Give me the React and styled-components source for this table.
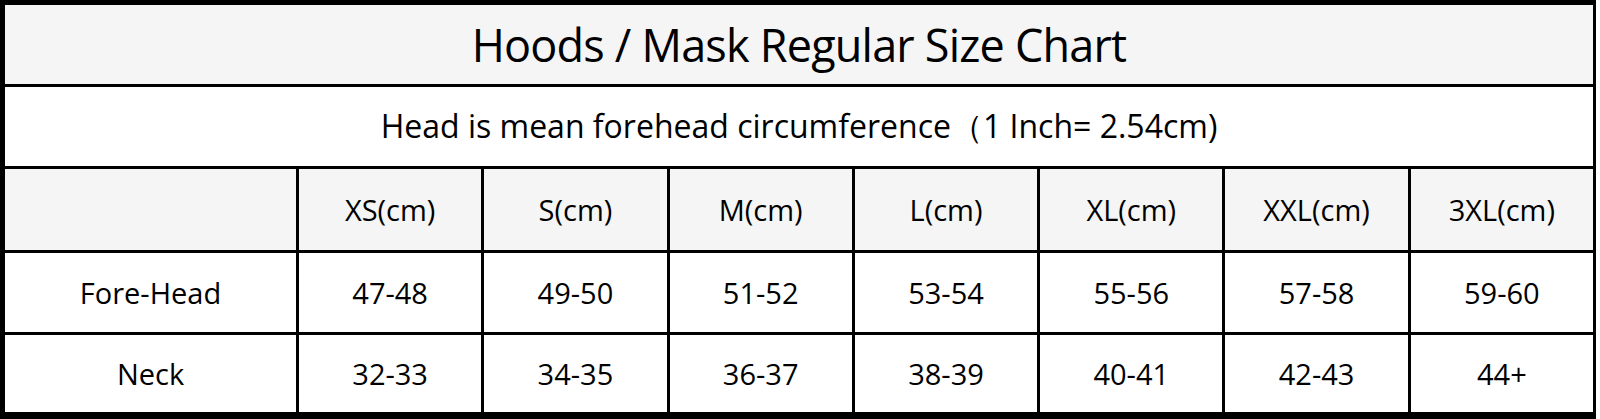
import styled, { createGlobalStyle } from 'styled-components';

const GlobalStyle = createGlobalStyle`
    html, body {
        margin: 0;
        padding: 0;
        background: #ffffff;
    }
    body {
        font-family: "Open Sans", "Liberation Sans", sans-serif;
        color: #000000;
    }
`;

const Chart = styled.div`
    width: 1596px;
    height: 419px;
    box-sizing: border-box;
    background: #000000;
    padding: 5px 3px 7px 5px;
    display: grid;
    grid-template-columns: 291px repeat(7, 1fr);
    grid-template-rows: 79px 79px 81px 79px 77px;
    gap: 3px;
`;

const Cell = styled.div`
    grid-column: ${props => props.$span ? '1 / -1' : 'auto'};
    background: ${props => props.$shaded ? '#f5f5f5' : '#ffffff'};
    display: flex;
    align-items: center;
    justify-content: center;
    font-size: ${props => props.$size || 29}px;
    letter-spacing: ${props => props.$spacing || 0}px;
    white-space: nowrap;
`;

const sizes = ['XS', 'S', 'M', 'L', 'XL', 'XXL', '3XL'];

const rows = [
    { label: 'Fore-Head', values: ['47-48', '49-50', '51-52', '53-54', '55-56', '57-58', '59-60'] },
    { label: 'Neck', values: ['32-33', '34-35', '36-37', '38-39', '40-41', '42-43', '44+'] },
];

export default function App() {
    return (
        <>
            <GlobalStyle />
            <Chart>
                <Cell $span $shaded $size={45} $spacing={-0.8}>Hoods / Mask Regular Size Chart</Cell>
                <Cell $span $size={32}>Head is mean forehead circumference（1 Inch= 2.54cm)</Cell>
                <Cell $shaded />
                {sizes.map(size => (
                    <Cell $shaded key={size}>{size}(cm)</Cell>
                ))}
                {rows.map(row => (
                    <>
                        <Cell key={row.label}>{row.label}</Cell>
                        {row.values.map((value, i) => (
                            <Cell key={row.label + i}>{value}</Cell>
                        ))}
                    </>
                ))}
            </Chart>
        </>
    );
}
